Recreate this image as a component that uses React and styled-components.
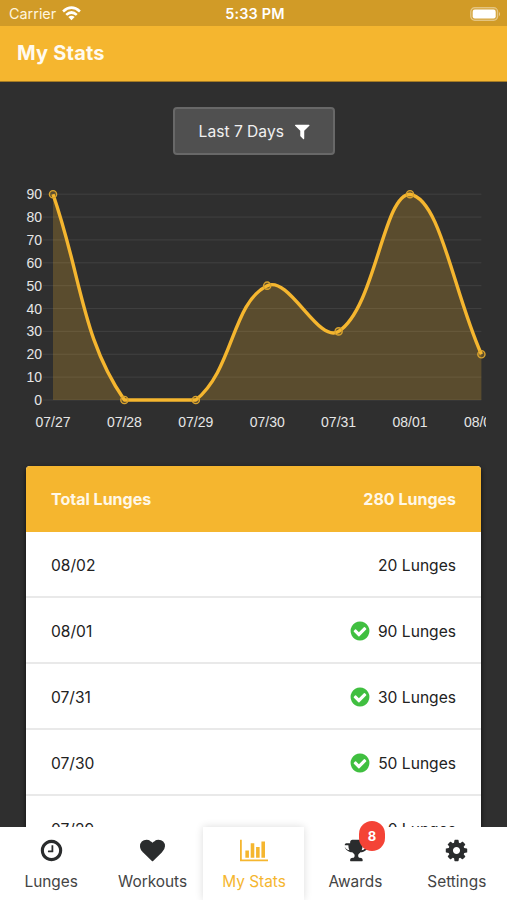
import React from "react";
import styled, { createGlobalStyle } from "styled-components";

const GlobalStyle = createGlobalStyle`
  * { box-sizing: border-box; }
  body { margin: 0; background: #2f2f2f; font-family: Inter, "Liberation Sans", sans-serif; }
`;

const Screen = styled.div`
  display: flex;
  flex-direction: column;
  height: 900px;
  overflow: hidden;
  background: #2f2f2f;
`;

const StatusBar = styled.div`
  flex: none;
  height: 26px;
  padding: 1px 6px 0 9px;
  display: grid;
  grid-template-columns: 1fr auto 1fr;
  align-items: center;
  background: #d19b27;
  color: #fff;
  font-size: 14.4px;
`;

const Carrier = styled.div`
  display: flex;
  align-items: center;
  gap: 6px;
  color: #fff5df;
`;

const Clock = styled.div`
  font-weight: 600;
  font-size: 14.4px;
  letter-spacing: 0.2px;
`;

const Battery = styled.div`
  display: flex;
  justify-content: flex-end;
`;

const Header = styled.header`
  flex: none;
  height: 56px;
  padding: 0 17px 2px;
  display: flex;
  align-items: center;
  background: #f5b62f;
  border-bottom: 1px solid #a57b24;
  color: #fffaf0;
`;

const Title = styled.h1`
  margin: 0;
  font-size: 20px;
  font-weight: 700;
  letter-spacing: 0.2px;
`;

const Content = styled.main`
  flex: 1;
  min-height: 0;
  overflow: hidden;
  display: flex;
  flex-direction: column;
  padding: 25px 26px 0;
`;

const FilterButton = styled.button`
  flex: none;
  align-self: center;
  width: 162px;
  height: 48px;
  padding: 0 3px 0 6px;
  display: flex;
  align-items: center;
  justify-content: center;
  gap: 9px;
  border: 2px solid #686868;
  border-radius: 4px;
  background: #505050;
  color: #f0f0f0;
  font: 400 15.6px Inter, sans-serif;
`;

const Chart = styled.svg`
  flex: none;
  display: block;
  width: 460px;
  height: 270px;
  margin-top: 25px;
  text {
    font: 14px "Liberation Sans", sans-serif;
    fill: #e6e6e6;
  }
`;

const Card = styled.section`
  flex: none;
  margin-top: 16px;
  border-radius: 4px;
  overflow: hidden;
  background: #fff;
  box-shadow: 0 2px 5px rgba(0, 0, 0, 0.7);
`;

const Row = styled.div`
  height: 66px;
  padding: 2px 25px 0;
  display: flex;
  align-items: center;
  justify-content: space-between;
  border-bottom: 2px solid #e9e9e9;
  color: #222;
  font-size: 15.6px;
`;

const TotalRow = styled(Row)`
  border-bottom-color: #f5b62f;
  background: #f5b62f;
  color: #fff8e8;
  font-size: 16px;
  font-weight: 700;
`;

const Amount = styled.span`
  display: flex;
  align-items: center;
  gap: 7px;
`;

const TabBar = styled.nav`
  flex: none;
  position: relative;
  z-index: 1;
  height: 73px;
  display: grid;
  grid-template-columns: repeat(5, 1fr);
  background: #fff;
`;

const Tab = styled.div`
  display: flex;
  flex-direction: column;
  align-items: center;
  padding: 11px 0 0 1px;
  gap: 9px;
  background: #fff;
  color: ${(p) => (p.$active ? "#f5b62f" : "#2a2c2d")};
  box-shadow: ${(p) => (p.$active ? "0 0 8px rgba(0, 0, 0, 0.14)" : "none")};
  z-index: ${(p) => (p.$active ? 1 : 0)};
`;

const TabLabel = styled.span`
  font-size: 15.4px;
  line-height: 19px;
  color: ${(p) => (p.$active ? "#f5b62f" : "#444")};
`;

const IconSlot = styled.span`
  position: relative;
  display: flex;
  height: 25px;
`;

const Badge = styled.span`
  position: absolute;
  left: 16px;
  top: -17.5px;
  width: 26px;
  height: 30px;
  border-radius: 13px;
  display: flex;
  align-items: center;
  justify-content: center;
  background: #f44336;
  color: #fff;
  font-size: 13px;
  font-weight: 700;
`;

const DISC =
  "M1664 896q0 209-103 385.5t-279.5 279.5-385.5 103-385.5-103-279.5-279.5-103-385.5 103-385.5 279.5-279.5 385.5-103 385.5 103 279.5 279.5 103 385.5z";

const ICONS = {
  filter:
    "M1595 295q17 41-14 70l-493 493v742q0 42-39 59-13 5-25 5-27 0-45-19l-256-256q-19-19-19-45v-486l-493-493q-31-29-14-70 17-39 59-39h1280q42 0 59 39z",
  check:
    "M1412 734q0-28-18-46l-91-90q-19-19-45-19t-45 19l-408 407-226-226q-19-19-45-19t-45 19l-91 90q-18 18-18 46 0 27 18 45l362 362q19 19 45 19 27 0 46-19l543-543q18-18 18-45z" + DISC,
  clock:
    "M1024 544v448q0 14-9 23t-23 9h-320q-14 0-23-9t-9-23v-64q0-14 9-23t23-9h224v-352q0-14 9-23t23-9h64q14 0 23 9t9 23zM1440 896q0-148-73-273t-198-198-273-73-273 73-198 198-73 273 73 273 198 198 273 73 273-73 198-198 73-273z" + DISC,
  heart:
    "M896 1664q-26 0-44-18l-624-602q-10-8-27.5-26t-55.5-65.5-68-97.5-53.5-121-23.5-138q0-220 127-344t351-124q62 0 126.5 21.5t120 58 95.5 68.5 76 68q36-36 76-68t95.5-68.5 120-58 126.5-21.5q224 0 351 124t127 344q0 221-229 450l-623 600q-18 18-44 18z",
  chart:
    "M640 896v512h-256v-512h256zm384-512v1024h-256v-1024h256zm1024 1152v128h-2048v-1536h128v1408h1920zm-640-896v768h-256v-768h256zm384-384v1152h-256v-1152h256z",
  trophy:
    "M458 883q-74-162-74-371h-256v96q0 78 94.5 162t235.5 113zm1206-275v-96h-256q0 209-74 371 141-29 235.5-113t94.5-162zm128-128v128q0 71-41.5 143t-112 130-173 97.5-215.5 44.5q-42 54-95 95-38 34-52.5 72.5t-14.5 89.5q0 54 30.5 91t97.5 37q75 0 133.5 45.5t58.5 114.5v64q0 14-9 23t-23 9h-832q-14 0-23-9t-9-23v-64q0-69 58.5-114.5t133.5-45.5q67 0 97.5-37t30.5-91q0-51-14.5-89.5t-52.5-72.5q-53-41-95-95-113-5-215.5-44.5t-173-97.5-112-130-41.5-143v-128q0-40 28-68t68-28h288v-96q0-66 47-113t113-47h576q66 0 113 47t47 113v96h288q40 0 68 28t28 68z",
  cog:
    "M1152 896q0-106-75-181t-181-75-181 75-75 181 75 181 181 75 181-75 75-181zm512-109v222q0 12-8 23t-20 13l-185 28q-19 54-39 91 35 50 107 138 10 12 10 25t-9 23q-27 37-99 108t-94 71q-12 0-26-9l-138-108q-44 23-91 38-16 136-29 186-7 28-36 28h-222q-14 0-24.5-8.5t-11.5-21.5l-28-184q-49-16-90-37l-141 107q-10 9-25 9-14 0-25-11-126-114-165-168-7-10-7-23 0-12 8-23 15-21 51-66.5t54-70.5q-27-50-41-99l-183-27q-13-2-21-12.5t-8-23.5v-222q0-12 8-23t19-13l186-28q14-46 39-92-40-57-107-138-10-12-10-24 0-10 9-23 26-36 98.5-107.5t94.5-71.5q13 0 26 10l138 107q44-23 91-38 16-136 29-186 7-28 36-28h222q14 0 24.5 8.5t11.5 21.5l28 184q49 16 90 37l142-107q9-9 24-9 13 0 25 10 129 119 165 170 7 8 7 22 0 12-8 23-15 21-51 66.5t-54 70.5q26 50 41 98l183 28q13 2 21 12.5t8 23.5z",
};

function Icon({ name, size = 25, color = "currentColor" }) {
  const units = name === "chart" ? 2048 : 1792;
  return (
    <svg width={(size * units) / 1792} height={size} viewBox={`0 0 ${units} 1792`} fill={color} fillRule="evenodd">
      <path d={ICONS[name]} />
    </svg>
  );
}

const DAYS = [
  ["07/27", 90],
  ["07/28", 0],
  ["07/29", 0],
  ["07/30", 50],
  ["07/31", 30],
  ["08/01", 90],
  ["08/02", 20],
];

const LEFT = 27;
const STEP = 71.4;
const TOP = 14.2;
const BOTTOM = 220;
const yFor = (value) => BOTTOM - (value / 90) * (BOTTOM - TOP);
const points = DAYS.map(([, value], i) => ({ x: LEFT + i * STEP, y: yFor(value) }));

const TENSION = 0.4;
const clampY = (y) => Math.min(BOTTOM, Math.max(TOP, y));
const controls = points.map((p, i) => {
  const prev = points[i - 1] || p;
  const next = points[i + 1] || p;
  const before = Math.hypot(p.x - prev.x, p.y - prev.y);
  const after = Math.hypot(next.x - p.x, next.y - p.y);
  const fa = (TENSION * before) / (before + after);
  const fb = (TENSION * after) / (before + after);
  return {
    inX: p.x - fa * (next.x - prev.x),
    inY: clampY(p.y - fa * (next.y - prev.y)),
    outX: p.x + fb * (next.x - prev.x),
    outY: clampY(p.y + fb * (next.y - prev.y)),
  };
});
const curve = points
  .map((p, i) => {
    if (i === 0) return `M${p.x} ${p.y}`;
    const a = controls[i - 1];
    const b = controls[i];
    return `C${a.outX} ${a.outY} ${b.inX} ${b.inY} ${p.x} ${p.y}`;
  })
  .join("");
const RIGHT = points[points.length - 1].x;

function LungeChart() {
  return (
    <Chart viewBox="0 0 460 270">
      {[0, 10, 20, 30, 40, 50, 60, 70, 80, 90].map((v) => (
        <g key={v}>
          <line x1={17} x2={RIGHT} y1={yFor(v)} y2={yFor(v)} stroke="#404040" />
          <text x={16} y={yFor(v) + 5} textAnchor="end">{v}</text>
        </g>
      ))}
      <path d={`${curve}L${RIGHT} ${BOTTOM}L${LEFT} ${BOTTOM}Z`} fill="#f5b62f" fillOpacity="0.22" />
      <path d={curve} fill="none" stroke="#f5b62f" strokeWidth="3.4" strokeLinejoin="round" />
      {points.map((p, i) => (
        <g key={i}>
          <circle cx={p.x} cy={p.y} r="3.6" fill="#f5b62f" fillOpacity="0.22" stroke="#d9a32e" strokeWidth="1.4" />
          <text x={p.x} y={246.5} textAnchor="middle">{DAYS[i][0]}</text>
        </g>
      ))}
    </Chart>
  );
}

const HISTORY = [
  { date: "08/02", count: 20 },
  { date: "08/01", count: 90, done: true },
  { date: "07/31", count: 30, done: true },
  { date: "07/30", count: 50, done: true },
  { date: "07/29", count: 0 },
];

const TABS = [
  { label: "Lunges", icon: "clock" },
  { label: "Workouts", icon: "heart" },
  { label: "My Stats", icon: "chart", active: true },
  { label: "Awards", icon: "trophy", badge: 8 },
  { label: "Settings", icon: "cog" },
];

export default function App() {
  return (
    <Screen>
      <GlobalStyle />
      <StatusBar>
        <Carrier>
          Carrier
          <svg width="19" height="15" viewBox="0 0 18 14" fill="none" stroke="#fff" strokeWidth="2.5">
            <path d="M1 5Q9-2 17 5M4 8.3Q9 3.8 14 8.3" />
            <path d="M6 10.4Q9 7.8 12 10.4L9 13.5Z" fill="#fff" stroke="none" />
          </svg>
        </Carrier>
        <Clock>5:33 PM</Clock>
        <Battery>
          <svg width="31" height="14" viewBox="0 0 31 14">
            <rect x="0.7" y="0.7" width="27" height="12.6" rx="4" fill="#fff" fillOpacity=".12" stroke="#fff" strokeOpacity=".4" strokeWidth="1.2" />
            <rect x="2.7" y="2.5" width="23" height="9" rx="2.2" fill="#fff" />
            <path d="M29 4.7q2 2.3 0 4.6z" fill="#fff" fillOpacity=".5" />
          </svg>
        </Battery>
      </StatusBar>
      <Header>
        <Title>My Stats</Title>
      </Header>
      <Content>
        <FilterButton>
          Last 7 Days
          <Icon name="filter" size={18.5} color="#fff" />
        </FilterButton>
        <LungeChart />
        <Card>
          <TotalRow>
            <span>Total Lunges</span>
            <span>280 Lunges</span>
          </TotalRow>
          {HISTORY.map((day) => (
            <Row key={day.date}>
              <span>{day.date}</span>
              <Amount>
                {day.done && <Icon name="check" size={22} color="#40bf40" />}
                {day.count} Lunges
              </Amount>
            </Row>
          ))}
        </Card>
      </Content>
      <TabBar>
        {TABS.map((tab) => (
          <Tab key={tab.label} $active={tab.active}>
            <IconSlot>
              <Icon name={tab.icon} />
              {tab.badge && <Badge>{tab.badge}</Badge>}
            </IconSlot>
            <TabLabel $active={tab.active}>{tab.label}</TabLabel>
          </Tab>
        ))}
      </TabBar>
    </Screen>
  );
}
